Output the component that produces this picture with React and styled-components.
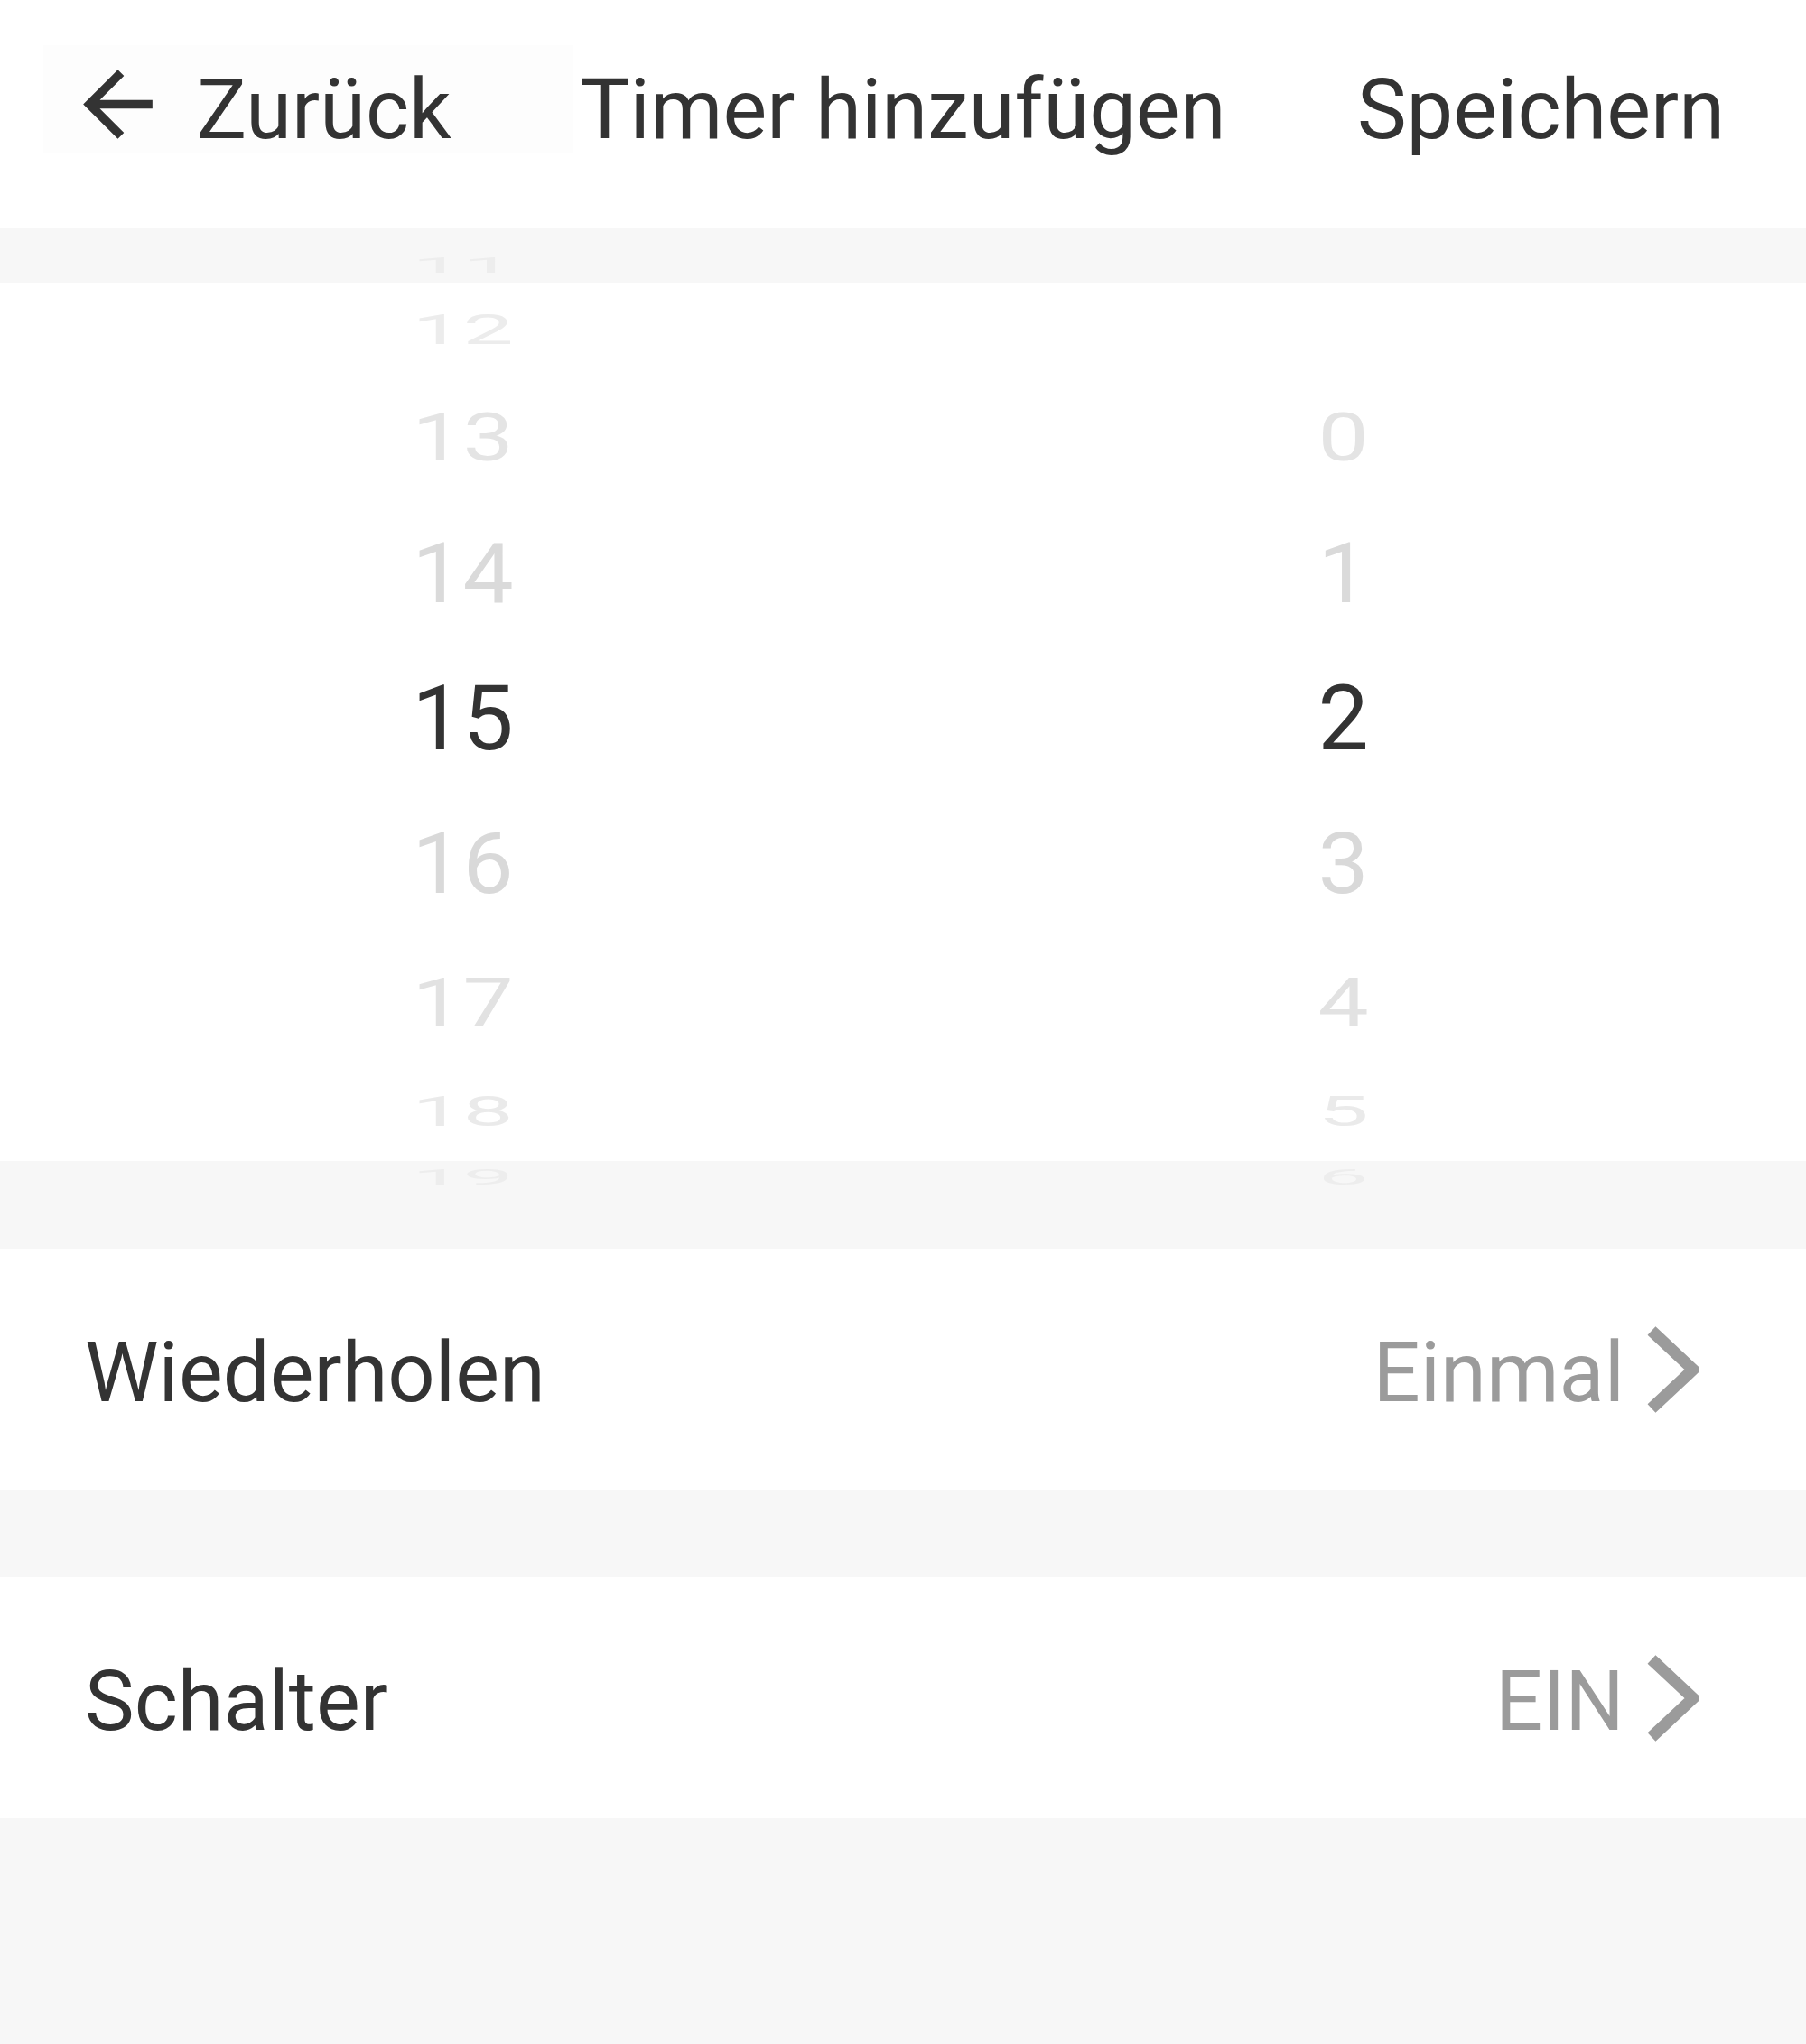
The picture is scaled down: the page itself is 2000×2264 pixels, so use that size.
import React from 'react';
import styled, { createGlobalStyle } from 'styled-components';

const GlobalStyle = createGlobalStyle`
  html, body {
    margin: 0;
    padding: 0;
    background: #f7f7f7;
  }
  body {
    font-family: Roboto, "Noto Sans", "Liberation Sans", sans-serif;
  }
`;

const Screen = styled.div`
  min-height: 2264px;
  background: #f7f7f7;
  color: #333333;
  font-family: Roboto, "Noto Sans", "Liberation Sans", sans-serif;
`;

const Header = styled.header`
  height: 252px;
  background: #ffffff;
  display: grid;
  grid-template-columns: 1fr auto 1fr;
  align-items: center;
`;

const BackButton = styled.div`
  justify-self: start;
  box-sizing: border-box;
  width: 587px;
  height: 120px;
  margin: 0 0 32px 48px;
  padding-left: 25px;
  display: flex;
  align-items: center;
  gap: 30px;
  background: #fdfdfd;
`;

const BackIcon = styled.svg`
  width: 115px;
  height: 115px;
  flex: none;
  margin-top: 11px;
  fill: #333333;
`;

const HeaderText = styled.span`
  font-size: 92px;
  line-height: 92px;
  color: #333333;
  white-space: nowrap;
  margin: ${(p) => p.$margin || '0'};
  justify-self: ${(p) => p.$justify || 'center'};
`;

const Picker = styled.section`
  height: 1131px;
  box-sizing: border-box;
  padding: 0 25px;
  display: grid;
  grid-template-columns: 1fr 1fr;
  overflow: hidden;
  background: linear-gradient(
    to bottom,
    #f7f7f7 0,
    #f7f7f7 61px,
    #ffffff 61px,
    #ffffff 1034px,
    #f7f7f7 1034px
  );
`;

const Wheel = styled.div`
  display: grid;
  grid-template-rows: 1fr;
  align-items: center;
  justify-items: center;
  box-sizing: border-box;
  height: 100%;
  padding-bottom: 44px;
`;

const WheelItem = styled.div`
  grid-area: 1 / 1;
  height: 100px;
  font-size: 100px;
  line-height: 100px;
  color: ${(p) => p.$color};
  transform-origin: 50% 50%;
`;

const Settings = styled.div`
  display: flex;
  flex-direction: column;
  gap: 97px;
`;

const Row = styled.div`
  height: 267px;
  box-sizing: border-box;
  padding: 0 118px 0 94px;
  background: #ffffff;
  display: flex;
  align-items: center;
  justify-content: space-between;
`;

const Label = styled.span`
  font-size: 92px;
  line-height: 92px;
  margin-top: 8px;
  color: #333333;
`;

const ValueGroup = styled.div`
  display: flex;
  align-items: center;
  gap: 23px;
`;

const Value = styled.span`
  font-size: 92px;
  line-height: 92px;
  margin-top: 8px;
  color: #9b9b9b;
`;

const Chevron = styled.svg`
  width: 60px;
  height: 100px;
  flex: none;
  fill: none;
  stroke: #9b9b9b;
  stroke-width: 13;
  stroke-linejoin: miter;
  stroke-linecap: butt;
`;

// wheel geometry: offset from the selected row and vertical squash per distance
const SLOTS = {
  '-4': { y: -502, s: 0.24, c: '#ededed' },
  '-3': { y: -431, s: 0.47, c: '#ececec' },
  '-2': { y: -312, s: 0.75, c: '#e4e4e4' },
  '-1': { y: -160.5, s: 0.92, c: '#dadada' },
  '0': { y: 0, s: 1, c: '#333333' },
  '1': { y: 161, s: 0.94, c: '#d9d9d9' },
  '2': { y: 314, s: 0.75, c: '#e2e2e2' },
  '3': { y: 435, s: 0.47, c: '#eaeaea' },
  '4': { y: 508, s: 0.24, c: '#ededed' },
};

function WheelColumn({ values, selected }) {
  return (
    <Wheel>
      {values.map((v, i) => {
        const d = i - selected;
        const slot = SLOTS[String(d)];
        if (!slot) return null;
        return (
          <WheelItem
            key={v}
            $color={slot.c}
            style={{ transform: `translateY(${slot.y}px) scaleY(${slot.s})` }}
          >
            {v}
          </WheelItem>
        );
      })}
    </Wheel>
  );
}

const hours = Array.from({ length: 24 }, (_, i) => i);
const minutes = Array.from({ length: 60 }, (_, i) => i);

function SettingRow({ label, value }) {
  return (
    <Row>
      <Label>{label}</Label>
      <ValueGroup>
        <Value>{value}</Value>
        <Chevron viewBox="0 0 60 100" aria-hidden="true">
          <polyline points="7,7 53,50 7,93" />
        </Chevron>
      </ValueGroup>
    </Row>
  );
}

export default function App() {
  return (
    <Screen>
      <GlobalStyle />
      <Header>
        <BackButton>
          <BackIcon viewBox="0 0 24 24" aria-hidden="true">
            <path d="M20 11H7.83l5.59-5.59L12 4l-8 8 8 8 1.41-1.41L7.83 13H20v-2z" />
          </BackIcon>
          <HeaderText $margin="23px 0 0 0">Zurück</HeaderText>
        </BackButton>
        <HeaderText $margin="0 0 9px 0">Timer hinzufügen</HeaderText>
        <HeaderText $margin="0 90px 9px 0" $justify="end">
          Speichern
        </HeaderText>
      </Header>
      <Picker>
        <WheelColumn values={hours} selected={15} />
        <WheelColumn values={minutes} selected={2} />
      </Picker>
      <Settings>
        <SettingRow label="Wiederholen" value="Einmal" />
        <SettingRow label="Schalter" value="EIN" />
      </Settings>
    </Screen>
  );
}
